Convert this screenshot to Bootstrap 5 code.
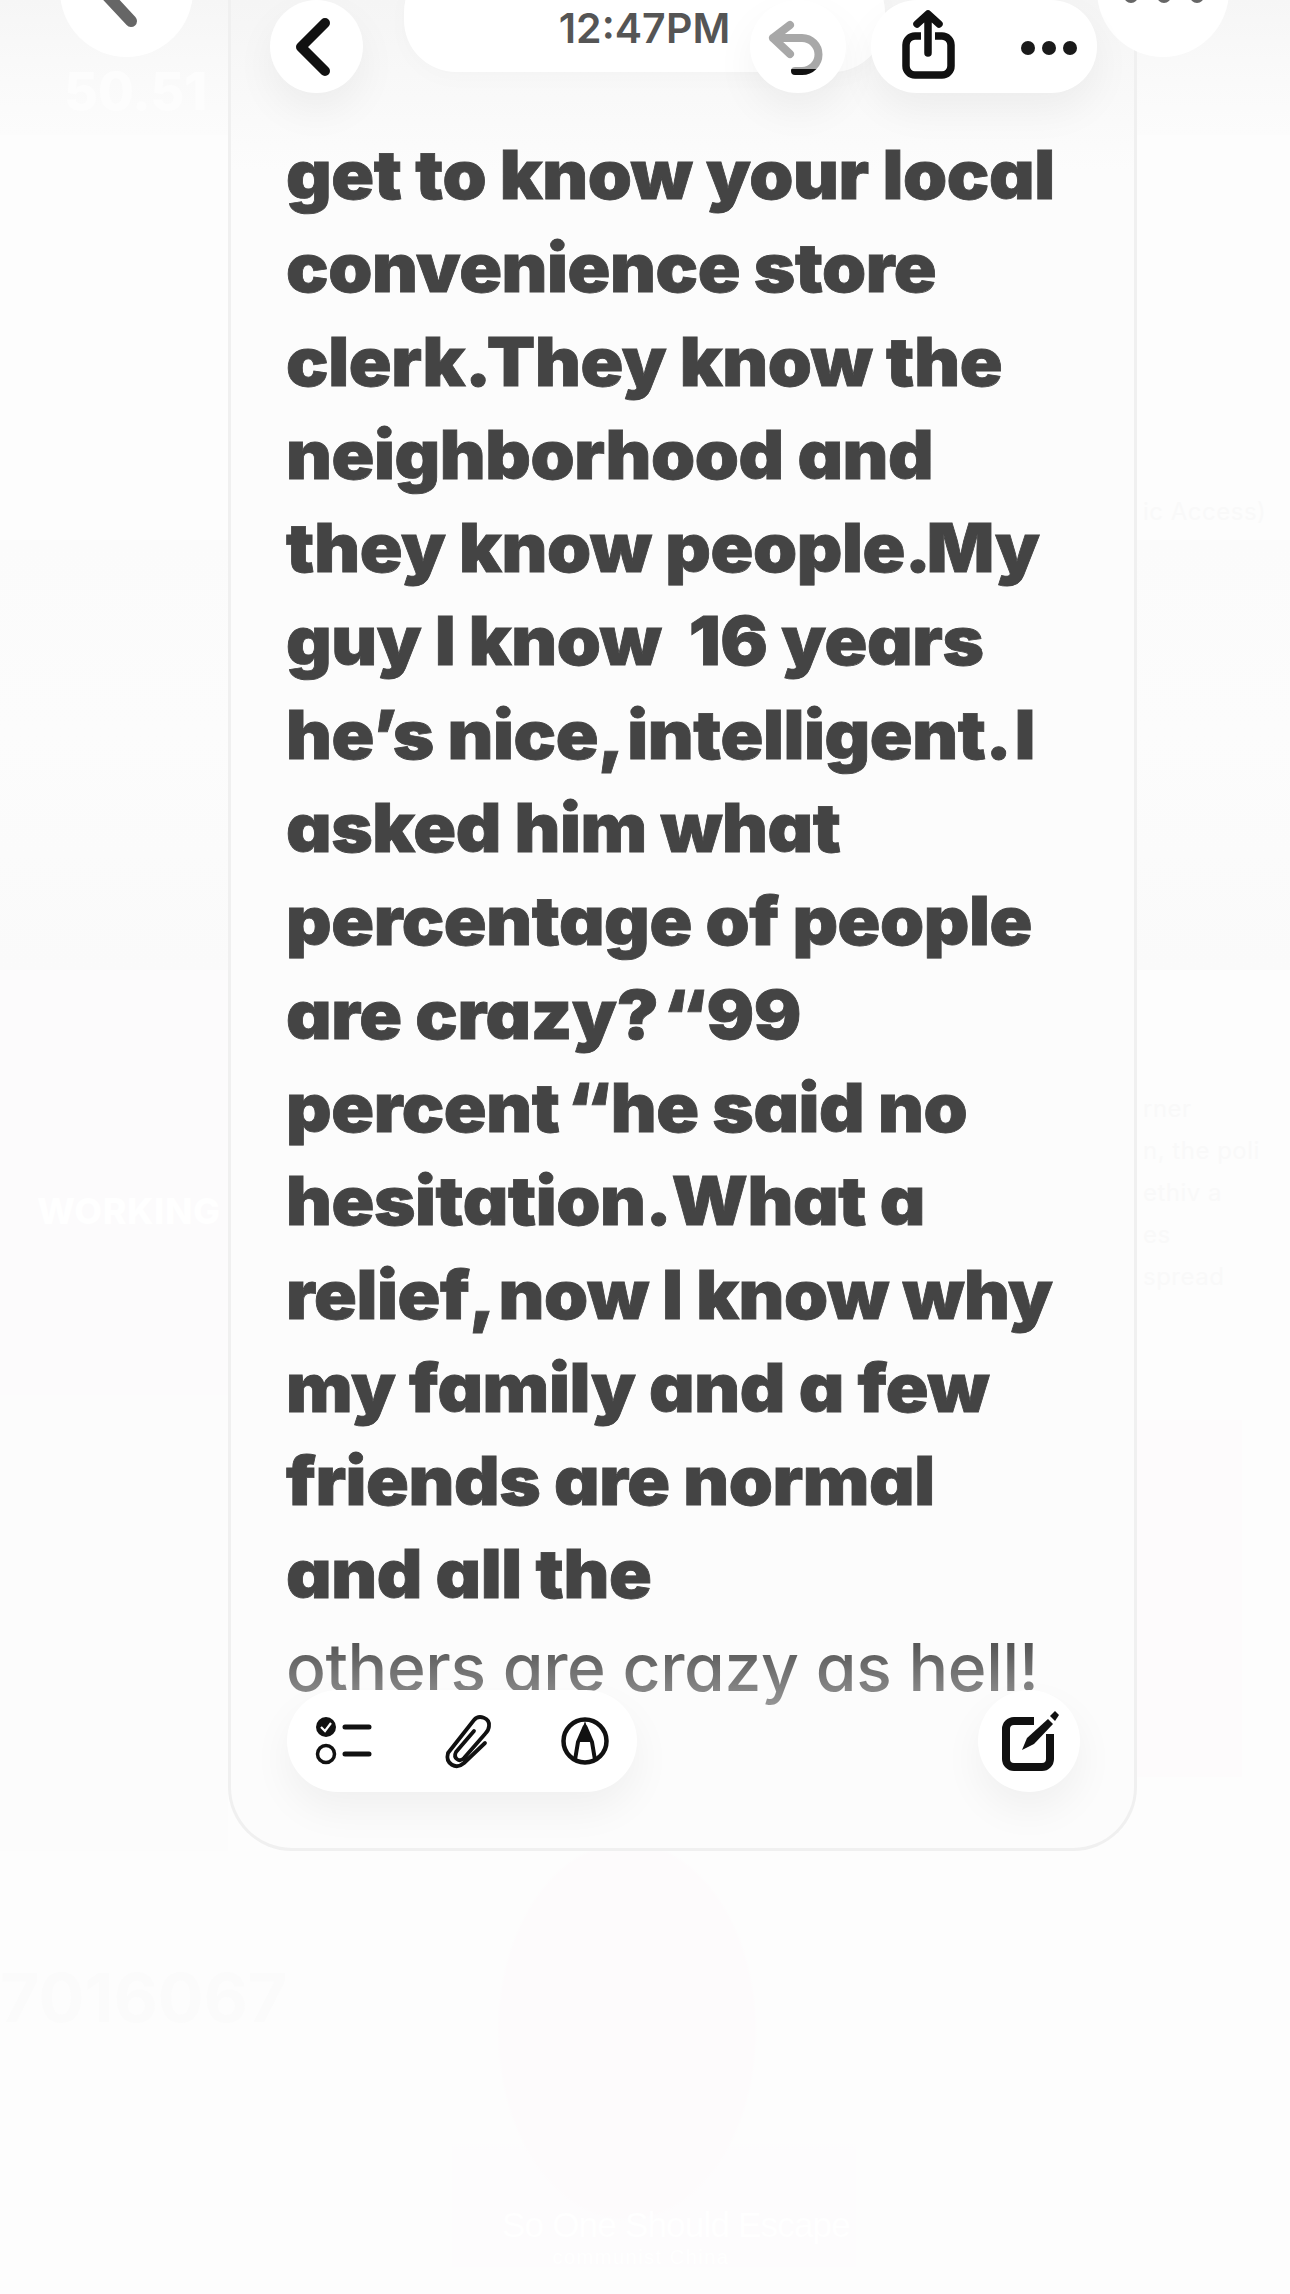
<!DOCTYPE html>
<html lang="en">
<head>
<meta charset="utf-8">
<title>Note</title>
<link href="https://cdn.jsdelivr.net/npm/bootstrap@5.3.0/dist/css/bootstrap.min.css" rel="stylesheet">
<style>
html,body{margin:0;background:#fdfdfd;}
body{font-family:Inter,"Liberation Sans",sans-serif;}
.stage{position:relative;width:1290px;height:2294px;overflow:hidden;background:#fdfdfd;}
.upper{height:1851px;}
.side{flex:0 0 auto;display:flex;flex-direction:column;overflow:hidden;}
.side-l{width:228px;}
.side-r{width:153px;}
.band{overflow:hidden;}
.band-top{height:135px;background:linear-gradient(#f6f6f6,#fafafa 60%,#fcfcfc);color:#fdfdfd;}
.band-top span{display:block;font-size:52px;font-weight:800;padding:66px 0 0 64px;line-height:1;}
.band-a{height:405px;background:#fdfdfd;}
.band-b{height:430px;background:linear-gradient(#fbfbfb,#fcfcfc 45%,#fafafa);}
.band-c{height:425px;background:#fcfbfc;padding:223px 0 0 37px;font-size:36px;line-height:36px;font-weight:800;letter-spacing:.5px;color:#fff;}
.band-d{height:456px;background:#fcfcfc;}
.band-r1{height:135px;background:linear-gradient(#f6f6f6,#fafafa 60%,#fcfcfc);}
.band-r2{height:405px;background:#fdfdfd;color:#f9f9f9;font-size:24px;line-height:30px;padding:362px 0 0 6px;white-space:nowrap;letter-spacing:.5px;}
.band-r3{height:430px;background:linear-gradient(#fbfbfb,#fcfcfc 45%,#fafafa);}
.band-r4{height:450px;background:#fdfdfd;color:#f9f9f9;font-size:24px;line-height:42px;padding:118px 0 0 6px;white-space:nowrap;letter-spacing:.5px;}
.band-r5{height:357px;width:105px;background:#fdfbfc;}
.note{width:909px;flex:0 0 auto;height:1851px;background:#fcfcfc;border:3px solid #f0f0f0;border-top:0;border-radius:0 0 64px 64px;position:relative;overflow:hidden;padding:0 0 0 55px;}
.top-shade{position:absolute;left:0;right:0;top:0;height:170px;background:linear-gradient(#f5f5f5,#fcfcfc);}
.note-text{position:relative;margin:0;padding-top:128px;font-size:67px;line-height:93.3px;font-weight:900;color:#444;letter-spacing:-.4px;font-feature-settings:"cv11";white-space:nowrap;-webkit-text-stroke:.8px #444;}
.note-line{display:block;transform:scaleX(1.055);transform-origin:left center;}
.gap-s{word-spacing:-6px;}
.gap-m{word-spacing:-9px;}
.gap-l{word-spacing:-13px;}
.fade-line{display:block;font-size:66px;font-weight:500;-webkit-text-stroke:0;background:linear-gradient(#555 25%,#999);-webkit-background-clip:text;background-clip:text;color:transparent;height:88px;overflow:hidden;}
.chip{position:absolute;background:#fff;display:flex;align-items:center;justify-content:center;}
.chip svg{display:block;flex:0 0 auto;}
.chip-back{left:270px;top:0;width:93px;height:93px;border-radius:50%;box-shadow:0 18px 40px rgba(0,0,0,.05);}
.chip-undo{left:750px;top:0;width:96px;height:93px;border-radius:50%;box-shadow:0 18px 40px rgba(0,0,0,.05);}
.chip-time{left:404px;top:-40px;width:481px;height:112px;border-radius:52px;align-items:flex-end;padding-bottom:23px;font-size:41px;line-height:1;font-weight:600;color:#555;word-spacing:-10px;box-shadow:0 6px 24px rgba(0,0,0,.02);}
.chip-share{left:871px;top:0;width:226px;height:93px;border-radius:46px;box-shadow:0 18px 40px rgba(0,0,0,.05);}
.chip-l{left:60px;top:-76px;width:133px;height:133px;border-radius:50%;}
.chip-r{left:1097px;top:-76px;width:132px;height:133px;border-radius:50%;}
.chip-tools{left:287px;top:1690px;width:350px;height:102px;border-radius:51px;box-shadow:0 18px 40px rgba(0,0,0,.05);}
.chip-pen{left:978px;top:1690px;width:102px;height:102px;border-radius:50%;box-shadow:0 18px 40px rgba(0,0,0,.05);}
.lower{height:443px;gap:24px;align-items:flex-start;}
.poster-l{width:428px;height:416px;background:#fdfdfd;padding:112px 0 0 0;font-size:68px;line-height:68px;font-weight:700;color:#fbfbfb;white-space:nowrap;overflow:hidden;}
.poster-m{width:404px;height:416px;background:radial-gradient(ellipse 130px 190px at 175px 180px,#fdfbfc 98%,transparent),linear-gradient(#fdfdfd 70%,#fdfcfd 72%);color:#fff;font-family:"Liberation Sans",sans-serif;text-align:center;padding-top:356px;}
.cap-big{font-size:35px;line-height:36px;display:block;padding-left:44px;letter-spacing:-.8px;white-space:nowrap;}
.cap-sm{font-size:20px;line-height:20px;display:block;margin-top:4px;padding-right:26px;letter-spacing:1.5px;white-space:nowrap;}
</style>
</head>
<body>
<div class="stage">
  <div class="upper d-flex">
    <div class="side side-l">
      <div class="band band-top"><span>50.51</span></div>
      <div class="band band-a"></div>
      <div class="band band-b"></div>
      <div class="band band-c">WORKING</div>
      <div class="band band-d"></div>
    </div>
    <div class="note">
      <div class="top-shade"></div>
      <p class="note-text">
        <span class="note-line">get to know your local</span>
        <span class="note-line">convenience store</span>
        <span class="note-line">clerk<span class="gap-l">. </span>They know the</span>
        <span class="note-line">neighborhood and</span>
        <span class="note-line">they know people<span class="gap-l">. </span>My</span>
        <span class="note-line">guy I know&nbsp; 16 years</span>
        <span class="note-line">he’s nice<span class="gap-s">, </span>intelligent<span class="gap-s">. </span>I</span>
        <span class="note-line">asked him what</span>
        <span class="note-line">percentage of people</span>
        <span class="note-line">are crazy<span class="gap-m">? </span>“99</span>
        <span class="note-line">percent<span class="gap-s"> </span>“he said no</span>
        <span class="note-line">hesitation<span class="gap-m">. </span>What a</span>
        <span class="note-line">relief<span class="gap-s">, </span>now I know why</span>
        <span class="note-line">my family and a few</span>
        <span class="note-line">friends are normal</span>
        <span class="note-line">and all the</span>
        <span class="fade-line">others are crazy as hell!</span>
      </p>
    </div>
    <div class="side side-r">
      <div class="band band-r1"></div>
      <div class="band band-r2">ic Access)</div>
      <div class="band band-r3"></div>
      <div class="band band-r4">rner<br>n, the poli<br>ethiv a<br>es<br>spread</div>
      <div class="band band-r5"></div>
    </div>
  </div>
  <div class="lower d-flex">
    <div class="poster-l">7016067</div>
    <div class="poster-m"><span class="cap-big">So One Should Escape</span><span class="cap-sm">communist China</span></div>
  </div>

  <div class="chip chip-l">
    <svg width="133" height="133" viewBox="0 0 133 133"><path d="M44 68 71 97" fill="none" stroke="#666" stroke-width="12" stroke-linecap="round"/></svg>
  </div>
  <div class="chip chip-r">
    <svg width="132" height="133" viewBox="0 0 132 133"><g fill="#666"><circle cx="34" cy="72" r="7"/><circle cx="67" cy="72" r="7"/><circle cx="100" cy="72" r="7"/></g></svg>
  </div>
  <div class="chip chip-back">
    <svg width="93" height="93" viewBox="0 0 93 93"><path d="M55 23 31 47l24 24" fill="none" stroke="#111" stroke-width="10" stroke-linecap="round" stroke-linejoin="round"/></svg>
  </div>
  <div class="chip chip-time"><span>12:47 PM</span></div>
  <div class="chip chip-undo">
    <svg width="96" height="93" viewBox="0 0 96 93">
      <defs>
        <clipPath id="undo-upper"><rect x="0" y="0" width="96" height="69"/></clipPath>
        <clipPath id="undo-lower"><rect x="0" y="69" width="96" height="24"/></clipPath>
      </defs>
      <path clip-path="url(#undo-upper)" d="M40 25 23 38l17 16M23 38h29a16.500 16.500 0 0 1 0 33h-7" fill="none" stroke="#a8a8a8" stroke-width="8" stroke-linecap="round" stroke-linejoin="round"/>
      <path clip-path="url(#undo-lower)" d="M23 38h29a16.500 16.500 0 0 1 0 33h-7" fill="none" stroke="#111" stroke-width="8" stroke-linecap="round" stroke-linejoin="round"/>
    </svg>
  </div>
  <div class="chip chip-share">
    <svg width="226" height="93" viewBox="0 0 226 93">
      <path d="M50 36h-6a9 9 0 0 0-9 9v21a9 9 0 0 0 9 9h27a9 9 0 0 0 9-9V45a9 9 0 0 0-9-9h-7" fill="none" stroke="#111" stroke-width="7.500"/>
      <path d="M57 53V15M46 24l11-10 11 10" fill="none" stroke="#111" stroke-width="7.500" stroke-linecap="round" stroke-linejoin="round"/>
      <g fill="#1a1a1a"><circle cx="157" cy="48" r="7"/><circle cx="178" cy="48" r="7"/><circle cx="199" cy="48" r="7"/></g>
    </svg>
  </div>
  <div class="chip chip-tools">
    <svg width="350" height="102" viewBox="0 0 350 102">
      <circle cx="39" cy="37" r="10" fill="#111"/><path d="M34 37l4 4 6-8" fill="none" stroke="#fff" stroke-width="2.200"/>
      <circle cx="39" cy="64" r="8.500" fill="none" stroke="#111" stroke-width="3.500"/>
      <path d="M58 37h24M58 64h24" stroke="#111" stroke-width="5" stroke-linecap="round"/>
      <path d="M198 53 177 73C169 80 158 74 161 63L187 30C192 24 203 28 202 36C202 39 200 42 198 44L177 68C172 73 166 68 169 62L187 41" fill="none" stroke="#111" stroke-width="3.800" stroke-linecap="round" stroke-linejoin="round"/>
      <circle cx="298" cy="51" r="21.500" fill="none" stroke="#111" stroke-width="4.500"/>
      <path d="M298 36 291 52 288 70M298 36 305 52 308 70" fill="none" stroke="#111" stroke-width="4" stroke-linejoin="round"/>
      <path d="M298 31 291 52H305Z" fill="#111"/>
    </svg>
  </div>
  <div class="chip chip-pen">
    <svg width="102" height="102" viewBox="0 0 102 102">
      <path d="M56 31H36a8 8 0 0 0-8 8v30a8 8 0 0 0 8 8h28a8 8 0 0 0 8-8V44" fill="none" stroke="#111" stroke-width="8"/>
      <path d="M44 60 49 48 70 29 75 34 56 54Z" fill="#111"/>
      <path d="M72 26 77 21 81 25 77 31Z" fill="#111"/>
    </svg>
  </div>
</div>
<script src="https://cdn.jsdelivr.net/npm/bootstrap@5.3.0/dist/js/bootstrap.bundle.min.js"></script>
</body>
</html>
